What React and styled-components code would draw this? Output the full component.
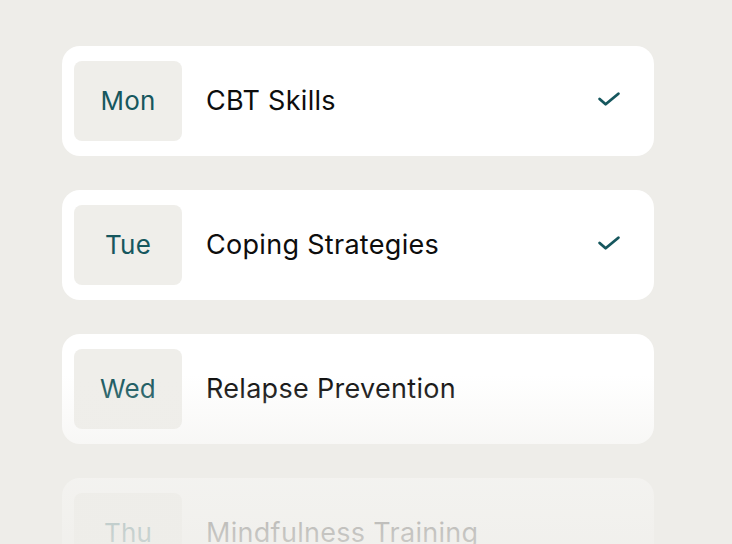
import React from 'react'
import styled, { createGlobalStyle } from 'styled-components'

const GlobalStyle = createGlobalStyle`
    html, body {
        margin: 0;
        padding: 0;
        background: #eeede9;
        font-family: Inter, "Noto Sans", sans-serif;
    }
`

const sessions = [
    { day: 'Mon', title: 'CBT Skills', done: true },
    { day: 'Tue', title: 'Coping Strategies', done: true },
    { day: 'Wed', title: 'Relapse Prevention', done: false },
    { day: 'Thu', title: 'Mindfulness Training', done: false },
]

const Check = () => (
    <svg width="30" height="30" viewBox="0 0 24 24" fill="none" stroke="#16575e" strokeWidth="2.3" strokeLinecap="round" strokeLinejoin="round">
        <path d="M4.5 12l4.8 4.2L19.5 7.8" />
    </svg>
)

const App = () => {
    return (
        <>
            <GlobalStyle />
            <Page>
                <List>
                    {sessions.map((s) => (
                        <Card key={s.day}>
                            <DayBox>{s.day}</DayBox>
                            <Title>{s.title}</Title>
                            {s.done && <CheckWrap><Check /></CheckWrap>}
                        </Card>
                    ))}
                </List>
                <Fade />
            </Page>
        </>
    )
}

const Page = styled.div`
    position: relative;
    width: 732px;
    height: 544px;
    overflow: hidden;
    background: #eeede9;
`

const List = styled.div`
    display: flex;
    flex-direction: column;
    gap: 34px;
    padding: 46px 0 0 62px;
    width: 592px;
`

const Card = styled.div`
    display: flex;
    align-items: center;
    height: 110px;
    box-sizing: border-box;
    padding: 0 30px 0 12px;
    background: #ffffff;
    border-radius: 18px;
    flex-shrink: 0;
`

const DayBox = styled.div`
    display: flex;
    align-items: center;
    justify-content: center;
    width: 108px;
    height: 80px;
    border-radius: 8px;
    background: #efeeea;
    color: #16575e;
    font-size: 26px;
    letter-spacing: 0.2px;
    font-weight: 400;
    flex-shrink: 0;
    padding-bottom: 2px;
    box-sizing: border-box;
`

const Title = styled.div`
    flex: 1;
    margin-left: 24px;
    color: #0d0d0d;
    font-size: 27px;
    font-weight: 400;
    letter-spacing: 0.3px;
    padding-bottom: 2px;
`

const CheckWrap = styled.div`
    display: flex;
    align-items: center;
    margin-top: -4px;
`

const Fade = styled.div`
    position: absolute;
    left: 0;
    right: 0;
    top: 375px;
    bottom: 0;
    pointer-events: none;
    background: linear-gradient(
        to bottom,
        rgba(238, 237, 233, 0) 0%,
        rgba(238, 237, 233, 0.4) 38%,
        rgba(238, 237, 233, 0.7) 62%,
        rgba(238, 237, 233, 0.84) 100%
    );
`

export default App
